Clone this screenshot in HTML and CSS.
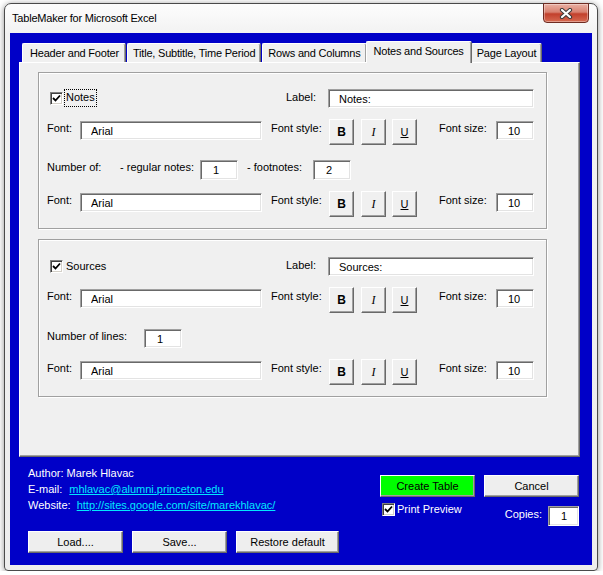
FILE: index.html
```html
<!DOCTYPE html>
<html lang="en">
<head>
  <meta charset="UTF-8" />
  <title>TableMaker for Microsoft Excel</title>
  <link rel="stylesheet" href="styles.css">
</head>
<body>
  <div class="window">
    <div class="titlebar">
      <span class="title">TableMaker for Microsoft Excel</span>
      <button class="close" type="button">
        <svg width="14" height="11" viewBox="0 0 14 11">
          <path d="M3 2 L11 9 M11 2 L3 9" stroke="#3a3a3a" stroke-width="4.2" stroke-linecap="round" fill="none" />
          <path d="M3 2 L11 9 M11 2 L3 9" stroke="#fff" stroke-width="2.2" stroke-linecap="round" fill="none" />
        </svg>
      </button>
    </div>

    <div class="client">
      <div class="tabs">
        <div class="tab tab-first">Header and Footer</div>
        <div class="tab">Title, Subtitle, Time Period</div>
        <div class="tab">Rows and Columns</div>
        <div class="tab active">Notes and Sources</div>
        <div class="tab">Page Layout</div>
      </div>

      <div class="panel">
        <!-- notes -->
        <div class="group">
          <div class="row row-top">
            <label class="check-wrap">
              <span class="cb"><svg width="9" height="9" viewBox="0 0 9 9"><path d="M1 4 L3.5 6.5 L8 1.5" stroke="#000" stroke-width="1.8" fill="none" /></svg></span>
              <span class="focus">Notes</span>
            </label>
            <span class="lbl lbl-label">Label:</span>
            <input class="field w-label" value="Notes:">
          </div>
          <div class="row row-btn">
            <span class="lbl lbl-font">Font:</span>
            <input class="field w-font" value="Arial">
            <span class="lbl lbl-style">Font style:</span>
            <button class="style-btn bold" type="button">B</button>
            <button class="style-btn ital" type="button">I</button>
            <button class="style-btn under" type="button">U</button>
            <span class="lbl lbl-size">Font size:</span>
            <input class="field w-size" value="10">
          </div>
          <div class="row row-num">
            <span class="lbl lbl-numof">Number of:</span>
            <span class="lbl lbl-regular">- regular notes:</span>
            <input class="field w-num" value="1">
            <span class="lbl lbl-foot">- footnotes:</span>
            <input class="field w-num" value="2">
          </div>
          <div class="row row-btn">
            <span class="lbl lbl-font">Font:</span>
            <input class="field w-font" value="Arial">
            <span class="lbl lbl-style">Font style:</span>
            <button class="style-btn bold" type="button">B</button>
            <button class="style-btn ital" type="button">I</button>
            <button class="style-btn under" type="button">U</button>
            <span class="lbl lbl-size">Font size:</span>
            <input class="field w-size" value="10">
          </div>
        </div>

        <!-- sources -->
        <div class="group group-src">
          <div class="row row-top">
            <label class="check-wrap">
              <span class="cb"><svg width="9" height="9" viewBox="0 0 9 9"><path d="M1 4 L3.5 6.5 L8 1.5" stroke="#000" stroke-width="1.8" fill="none" /></svg></span>
              <span class="plain">Sources</span>
            </label>
            <span class="lbl lbl-label">Label:</span>
            <input class="field w-label" value="Sources:">
          </div>
          <div class="row row-btn">
            <span class="lbl lbl-font">Font:</span>
            <input class="field w-font" value="Arial">
            <span class="lbl lbl-style">Font style:</span>
            <button class="style-btn bold" type="button">B</button>
            <button class="style-btn ital" type="button">I</button>
            <button class="style-btn under" type="button">U</button>
            <span class="lbl lbl-size">Font size:</span>
            <input class="field w-size" value="10">
          </div>
          <div class="row row-num">
            <span class="lbl lbl-lines">Number of lines:</span>
            <input class="field w-num" value="1">
          </div>
          <div class="row row-btn">
            <span class="lbl lbl-font">Font:</span>
            <input class="field w-font" value="Arial">
            <span class="lbl lbl-style">Font style:</span>
            <button class="style-btn bold" type="button">B</button>
            <button class="style-btn ital" type="button">I</button>
            <button class="style-btn under" type="button">U</button>
            <span class="lbl lbl-size">Font size:</span>
            <input class="field w-size" value="10">
          </div>
        </div>
      </div>

      <div class="footer">
        <div class="footer-left">
          <div class="info">Author: Marek Hlavac</div>
          <div class="info">E-mail: <a class="link link-mail" href="#">mhlavac@alumni.princeton.edu</a></div>
          <div class="info">Website: <a class="link" href="#">http://sites.google.com/site/marekhlavac/</a></div>
          <div class="file-btns">
            <button class="btn" type="button">Load....</button>
            <button class="btn" type="button">Save...</button>
            <button class="btn btn-wide" type="button">Restore default</button>
          </div>
        </div>
        <div class="footer-right">
          <div class="main-btns">
            <button class="btn btn-create" type="button">Create Table</button>
            <button class="btn" type="button">Cancel</button>
          </div>
          <div class="print-row">
            <span class="cb cb-print"><svg width="9" height="9" viewBox="0 0 9 9"><path d="M1 4 L3.5 6.5 L8 1.5" stroke="#000" stroke-width="1.8" fill="none" /></svg></span>
            <span class="print-text">Print Preview</span>
            <span class="copies">Copies:</span>
            <input class="field w-copies" value="1">
          </div>
        </div>
      </div>
    </div>
  </div>
</body>
</html>
```

FILE: styles.css
```css
* {
  box-sizing: border-box;
}

body {
  margin: 0;
  background: #fff;
  font-family: "Liberation Sans", Arial, sans-serif;
  font-size: 11px;
  color: #000;
}

.window {
  width: 594px;
  height: 568px;
  margin: 3px 0 0 4px;
  padding: 0 5px 5px;
  border: 1px solid #4a4a4a;
  border-radius: 7px 7px 4px 4px;
  background: linear-gradient(#fdfdfd, #f2f2f2 30px, #ededed);
  box-shadow: 0 1px 6px rgba(0, 0, 0, 0.45);
  display: flex;
  flex-direction: column;
}

.titlebar {
  height: 29px;
  display: flex;
  justify-content: space-between;
  align-items: flex-start;
}

.title {
  margin: 8px 0 0 2px;
  line-height: 13px;
  letter-spacing: -0.2px;
}

.close {
  width: 46px;
  height: 20px;
  margin: -1px 3px 0 0;
  padding: 0;
  border: 1px solid #6e2b22;
  border-radius: 0 0 4px 4px;
  background: linear-gradient(#eab0a3, #d88170 45%, #c2402c 55%, #d66a52);
  box-shadow: inset 0 0 0 1px rgba(255, 255, 255, 0.35);
  display: flex;
  align-items: center;
  justify-content: center;
}

.client {
  height: 532px;
  padding-top: 8px;
  background: #0000c8;
}

/* tabs */

.tabs {
  display: flex;
  height: 21px;
  margin-left: 12px;
}

.tab {
  height: 19px;
  margin-top: 2px;
  margin-right: 1px;
  padding: 0 5px;
  line-height: 18px;
  letter-spacing: -0.2px;
  background: #f0f0f0;
  border: 1px solid;
  border-color: #fff #696969 transparent #fff;
  border-bottom: none;
  border-radius: 2px 2px 0 0;
  box-shadow: inset -1px 0 0 #a0a0a0;
  white-space: nowrap;
}

.tab-first {
  padding: 0 6px 0 7px;
}

.tab.active {
  position: relative;
  z-index: 1;
  height: 22px;
  margin: 0 -1px -1px -2px;
  padding: 0 7px;
  line-height: 19px;
}

/* panel */

.panel {
  width: 561px;
  height: 395px;
  margin-left: 9px;
  padding: 9px 0 0 18px;
  background: #f0f0f0;
  border: 1px solid;
  border-color: #fff #696969 #696969 #fff;
  box-shadow: inset -1px -1px 0 #a0a0a0;
}

.group {
  width: 509px;
  height: 157px;
  padding: 16px 0 0 8px;
  border: 1px solid #a0a0a0;
  box-shadow: inset 1px 1px 0 #fff, 1px 1px 0 #fff;
}

.group-src {
  height: 158px;
  margin-top: 10px;
  padding-top: 17px;
}

.row {
  display: flex;
  align-items: flex-start;
}

.row + .row {
  margin-top: 11px;
}

.row-top {
  height: 19px;
}

.row-btn {
  height: 26px;
}

.row.row-num {
  height: 20px;
  margin-top: 15px;
}

.group-src .row.row-num {
  height: 19px;
  margin-top: 16px;
}

.lbl {
  line-height: 13px;
  white-space: nowrap;
}

.row-top .lbl {
  padding-top: 2px;
}

.row-btn .lbl {
  padding-top: 3px;
}

.row-num .lbl {
  padding-top: 1px;
}

.row-btn .field {
  margin-top: 2px;
}

.check-wrap {
  width: 239px;
  display: flex;
  align-items: center;
  height: 16px;
  margin-top: 1px;
  padding-left: 3px;
}

.cb {
  width: 13px;
  height: 13px;
  background: #fff;
  border: 1px solid;
  border-color: #808080 #fff #fff #808080;
  box-shadow: inset 1px 1px 0 #404040, inset -1px -1px 0 #d4d0c8;
  display: flex;
  align-items: center;
  justify-content: center;
  flex-shrink: 0;
}

.focus {
  margin-left: 2px;
  padding: 1px 1px 2px;
  outline: 1px dotted #000;
  line-height: 13px;
}

.plain {
  margin-left: 3px;
}

.lbl-label { width: 42px; }
.lbl-font { width: 33px; }
.lbl-style { width: 58px; margin-left: 9px; }
.lbl-size { width: 57px; margin-left: 22px; }
.lbl-numof { width: 73px; }
.lbl-regular { width: 80px; }
.lbl-foot { width: 66px; margin-left: 9px; }
.lbl-lines { width: 97px; }

.field {
  height: 19px;
  padding: 0 0 0 10px;
  font: inherit;
  color: #000;
  background: #fff;
  border: 1px solid;
  border-color: #a0a0a0 #fff #fff #a0a0a0;
  box-shadow: inset 1px 1px 0 #696969, inset -1px -1px 0 #e3e3e3;
  outline: none;
}

.row-num .field {
  height: 20px;
}

.group-src .row-num .field {
  height: 19px;
}

.w-label { width: 206px; }
.w-font { width: 182px; }
.w-size { width: 38px; padding-left: 11px; }
.w-num { width: 38px; padding-left: 12px; }
.w-copies { width: 31px; height: 20px; padding-left: 12px; }

.style-btn {
  width: 25px;
  height: 26px;
  padding: 0;
  margin-right: 7px;
  background: #f0f0f0;
  border: 1px solid;
  border-color: #fff #696969 #696969 #fff;
  box-shadow: inset -1px -1px 0 #a0a0a0;
  font-family: "Liberation Sans", Arial, sans-serif;
  font-size: 12px;
  color: #000;
}

.style-btn.ital {
  margin-right: 6px;
  font-family: "Liberation Serif", "Times New Roman", serif;
  font-style: italic;
}

.style-btn.bold {
  font-weight: bold;
}

.style-btn.under {
  margin-right: 0;
  font-size: 11px;
  text-decoration: underline;
}

/* bottom part */

.footer {
  display: flex;
  padding: 8px 0 0 18px;
  color: #fff;
}

.footer-left {
  width: 352px;
}

.info {
  line-height: 16px;
  white-space: nowrap;
}

.link {
  margin-left: 3px;
  color: #00e8ff;
}

.link-mail {
  margin-left: 4px;
}

.file-btns {
  display: flex;
  gap: 9px;
  margin-top: 18px;
}

.btn {
  width: 95px;
  height: 22px;
  padding: 0;
  background: #eeeeee;
  border: 1px solid;
  border-color: #fff #696969 #696969 #fff;
  box-shadow: inset -1px -1px 0 #a0a0a0;
  font-family: "Liberation Sans", Arial, sans-serif;
  font-size: 11px;
  color: #000;
}

.btn-wide {
  width: 103px;
}

.btn-create {
  background: #00ff00;
}

.footer-right {
  width: 199px;
  margin-top: 10px;
}

.main-btns {
  display: flex;
  gap: 9px;
}

.print-row {
  display: flex;
  align-items: flex-start;
  margin-top: 6px;
}

.cb-print {
  margin-left: 2px;
}

.print-text {
  margin-left: 2px;
  line-height: 13px;
}

.copies {
  margin: 5px 6px 0 auto;
  line-height: 13px;
}

.w-copies {
  margin-top: 3px;
}
```
